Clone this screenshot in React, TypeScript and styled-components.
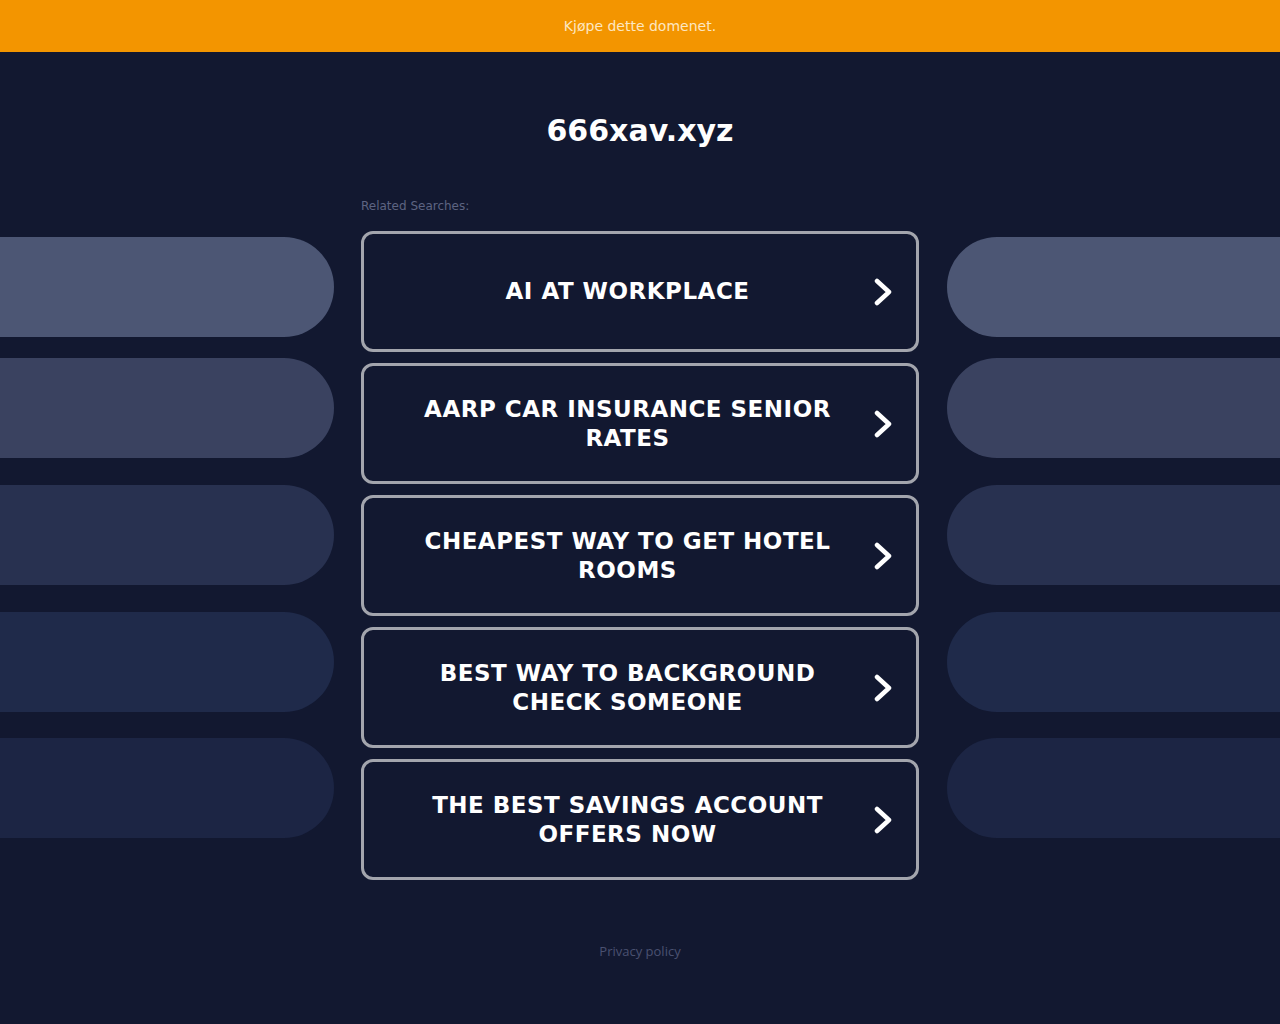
import { createGlobalStyle, styled } from 'styled-components';

const GlobalStyle = createGlobalStyle`
  html, body {
    margin: 0;
    padding: 0;
    background-color: #121830;
  }
  body {
    font-family: 'DejaVu Sans', Verdana, sans-serif;
  }
`;

const searches = [
  'AI AT WORKPLACE',
  'AARP CAR INSURANCE SENIOR RATES',
  'CHEAPEST WAY TO GET HOTEL ROOMS',
  'BEST WAY TO BACKGROUND CHECK SOMEONE',
  'THE BEST SAVINGS ACCOUNT OFFERS NOW',
];

// side decoration pills, top gap and colour per row
const pills = [
  { gap: 23, color: '#4c5674' },
  { gap: 21, color: '#3a4260' },
  { gap: 27, color: '#283150' },
  { gap: 27, color: '#1f2a4a' },
  { gap: 26, color: '#1c2544' },
];

const Page = styled.div`
  min-height: 1024px;
  background-color: #121830;
  display: flex;
  flex-direction: column;
`;

const TopBar = styled.div`
  height: 52px;
  background-color: #f39500;
  display: flex;
  align-items: center;
  justify-content: center;
  color: #fde7c2;
  font-size: 14px;
`;

const Layout = styled.div`
  display: grid;
  grid-template-columns: 1fr 558px 1fr;
  column-gap: 27.5px;
`;

const Header = styled.div`
  grid-column: 2;
  grid-row: 1;
  display: flex;
  flex-direction: column;
`;

const Title = styled.h1`
  margin: 60px 0 0;
  text-align: center;
  color: #ffffff;
  font-size: 30px;
  line-height: 38px;
  font-weight: bold;
`;

const Related = styled.div`
  margin-top: 48px;
  color: #5d6482;
  font-family: 'DejaVu Sans', sans-serif;
  font-size: 12px;
  line-height: 16px;
`;

const PillStack = styled.div<{ $side: 'left' | 'right' }>`
  grid-row: 2;
  grid-column: ${(p) => (p.$side === 'left' ? 1 : 3)};
  display: flex;
  flex-direction: column;
`;

const Pill = styled.div<{ $side: 'left' | 'right'; $gap: number; $color: string }>`
  height: 100px;
  margin-top: ${(p) => p.$gap}px;
  background-color: ${(p) => p.$color};
  border-radius: ${(p) => (p.$side === 'left' ? '0 50px 50px 0' : '50px 0 0 50px')};
`;

const CardList = styled.div`
  grid-row: 2;
  grid-column: 2;
  margin-top: 17px;
  display: flex;
  flex-direction: column;
  gap: 11px;
`;

const Card = styled.a`
  box-sizing: border-box;
  height: 121px;
  border: 3px solid #a3a5ad;
  border-radius: 12px;
  display: flex;
  align-items: center;
  padding: 0 24px 0 41px;
  text-decoration: none;
  cursor: pointer;
`;

const CardText = styled.span`
  flex: 1;
  text-align: center;
  color: #ffffff;
  font-size: 23px;
  line-height: 29px;
  font-weight: bold;
  letter-spacing: 0.5px;
`;

const Chevron = styled.svg`
  flex: none;
  margin-left: 24px;
  width: 18px;
  height: 28px;
`;

const Footer = styled.div`
  margin-top: 62px;
  text-align: center;
  color: #4a5170;
  font-family: 'Open Sans', 'DejaVu Sans', sans-serif;
  font-size: 13px;
`;

const Side = ({ side }: { side: 'left' | 'right' }) => (
  <PillStack $side={side}>
    {pills.map((p, i) => (
      <Pill key={i} $side={side} $gap={p.gap} $color={p.color} />
    ))}
  </PillStack>
);

const App = () => {
  return (
    <Page>
      <GlobalStyle />
      <TopBar>Kjøpe dette domenet.</TopBar>
      <Layout>
        <Header>
          <Title>666xav.xyz</Title>
          <Related>Related Searches:</Related>
        </Header>
        <Side side="left" />
        <CardList>
          {searches.map((s) => (
            <Card key={s}>
              <CardText>{s}</CardText>
              <Chevron viewBox="0 0 18 28">
                <polyline
                  points="3,3 15,14 3,25"
                  fill="none"
                  stroke="#ffffff"
                  strokeWidth="4.5"
                  strokeLinecap="round"
                  strokeLinejoin="round"
                />
              </Chevron>
            </Card>
          ))}
        </CardList>
        <Side side="right" />
      </Layout>
      <Footer>Privacy policy</Footer>
    </Page>
  );
};

export default App;
